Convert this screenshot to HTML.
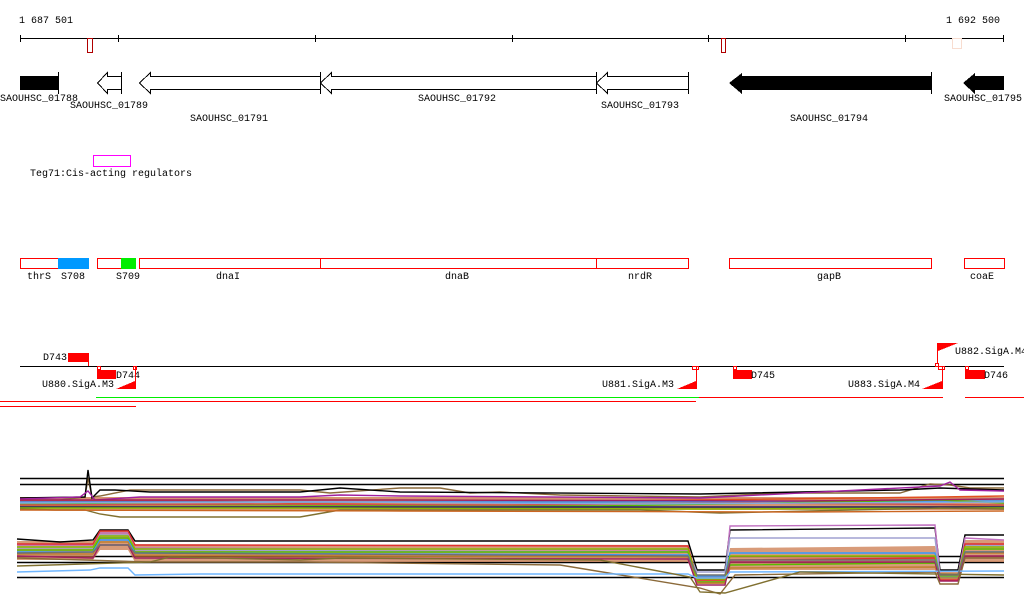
<!DOCTYPE html>
<html><head><meta charset="utf-8"><style>
html,body{margin:0;padding:0;background:#fff;width:1024px;height:611px;overflow:hidden}
svg text{font-family:"Liberation Mono","DejaVu Sans Mono",monospace;font-size:10px;fill:#000}
</style></head><body>
<svg width="1024" height="611" viewBox="0 0 1024 611" xmlns="http://www.w3.org/2000/svg" shape-rendering="crispEdges">
<text x="19" y="23">1 687 501</text>
<text x="946" y="23">1 692 500</text>
<g stroke="#000" stroke-width="1">
<line x1="20" y1="38.5" x2="1004" y2="38.5"/>
<line x1="20.5" y1="35" x2="20.5" y2="42"/><line x1="118.5" y1="35" x2="118.5" y2="42"/>
<line x1="315.5" y1="35" x2="315.5" y2="42"/><line x1="512.5" y1="35" x2="512.5" y2="42"/>
<line x1="708.5" y1="35" x2="708.5" y2="42"/><line x1="905.5" y1="35" x2="905.5" y2="42"/>
<line x1="1003.5" y1="35" x2="1003.5" y2="42"/>
</g>
<rect x="87.5" y="38.5" width="5" height="14" fill="none" stroke="#b00000"/>
<rect x="721.5" y="38.5" width="4" height="14" fill="none" stroke="#b00000"/>
<rect x="952.5" y="38.5" width="9" height="10" fill="none" stroke="#f8ddd0"/>
<rect x="20" y="76" width="38" height="14" fill="#000"/>
<line x1="58.5" y1="72" x2="58.5" y2="94" stroke="#000"/>
<g fill="#fff" stroke="#000" stroke-width="1">
<polygon points="97.5,83 107.5,72.5 107.5,76.5 121.5,76.5 121.5,89.5 107.5,89.5 107.5,93.5"/>
<polygon points="139.5,83 150.5,72.5 150.5,76.5 320.5,76.5 320.5,89.5 150.5,89.5 150.5,93.5"/>
<polygon points="320.5,83 331.5,72.5 331.5,76.5 596.5,76.5 596.5,89.5 331.5,89.5 331.5,93.5"/>
<polygon points="596.5,83 607.5,72.5 607.5,76.5 688.5,76.5 688.5,89.5 607.5,89.5 607.5,93.5"/>
<line x1="121.5" y1="72" x2="121.5" y2="94"/><line x1="320.5" y1="72" x2="320.5" y2="94"/>
<line x1="596.5" y1="72" x2="596.5" y2="94"/><line x1="688.5" y1="72" x2="688.5" y2="94"/>
</g>
<polygon points="729,83 742,73 742,76 931,76 931,90 742,90 742,94" fill="#000"/>
<line x1="931.5" y1="72" x2="931.5" y2="94" stroke="#000"/>
<polygon points="963,83 975,73 975,76 1004,76 1004,90 975,90 975,94" fill="#000"/>
<text x="0" y="101">SAOUHSC_01788</text>
<text x="70" y="108">SAOUHSC_01789</text>
<text x="190" y="121">SAOUHSC_01791</text>
<text x="418" y="101">SAOUHSC_01792</text>
<text x="601" y="108">SAOUHSC_01793</text>
<text x="790" y="121">SAOUHSC_01794</text>
<text x="944" y="101">SAOUHSC_01795</text>
<rect x="93.5" y="155.5" width="37" height="11" fill="none" stroke="#ff00ff"/>
<text x="30" y="176">Teg71:Cis-acting regulators</text>
<g fill="none" stroke="#ff0000">
<rect x="20.5" y="258.5" width="38" height="10"/>
<rect x="97.5" y="258.5" width="24" height="10"/>
<rect x="139.5" y="258.5" width="181" height="10"/>
<rect x="320.5" y="258.5" width="276" height="10"/>
<rect x="596.5" y="258.5" width="92" height="10"/>
<rect x="729.5" y="258.5" width="202" height="10"/>
<rect x="964.5" y="258.5" width="40" height="10"/>
</g>
<rect x="58" y="258" width="31" height="11" fill="#0099ff"/>
<rect x="121" y="258" width="15" height="11" fill="#00ee00"/>
<text x="27" y="279">thrS</text><text x="61" y="279">S708</text><text x="116" y="279">S709</text>
<text x="216" y="279">dnaI</text><text x="445" y="279">dnaB</text><text x="628" y="279">nrdR</text>
<text x="817" y="279">gapB</text><text x="970" y="279">coaE</text>
<line x1="20" y1="366.5" x2="1004" y2="366.5" stroke="#000"/>
<text x="43" y="360">D743</text>
<rect x="68" y="353" width="21" height="9" fill="#f00"/>
<line x1="88.5" y1="353" x2="88.5" y2="366" stroke="#f00"/>
<rect x="97" y="370" width="19" height="9" fill="#f00"/>
<rect x="97.5" y="366.5" width="3" height="3" fill="none" stroke="#f00"/>
<text x="116" y="378">D744</text>
<text x="42" y="387">U880.SigA.M3</text>
<polygon points="116,389 135,381 135,389" fill="#f00"/>
<line x1="135.5" y1="366" x2="135.5" y2="389" stroke="#f00"/>
<rect x="133.5" y="366.5" width="3" height="3" fill="none" stroke="#f00"/>
<text x="602" y="387">U881.SigA.M3</text>
<polygon points="677,389 696,381 696,389" fill="#f00"/>
<line x1="696.5" y1="366" x2="696.5" y2="389" stroke="#f00"/>
<rect x="692.5" y="366.5" width="6" height="3" fill="none" stroke="#f00"/>
<rect x="733" y="370" width="19" height="9" fill="#f00"/>
<rect x="733.5" y="366.5" width="3" height="3" fill="none" stroke="#f00"/>
<text x="751" y="378">D745</text>
<text x="848" y="387">U883.SigA.M4</text>
<polygon points="922,389 942,381 942,389" fill="#f00"/>
<line x1="942.5" y1="366" x2="942.5" y2="389" stroke="#f00"/>
<rect x="938.5" y="366.5" width="6" height="3" fill="none" stroke="#f00"/>
<polygon points="938,343 958,343 938,351" fill="#f00"/>
<line x1="937.5" y1="343" x2="937.5" y2="364" stroke="#f00"/>
<rect x="935.5" y="363.5" width="3" height="3" fill="none" stroke="#f00"/>
<text x="955" y="354">U882.SigA.M4</text>
<rect x="965" y="370" width="20" height="9" fill="#f00"/>
<rect x="965.5" y="366.5" width="3" height="3" fill="none" stroke="#f00"/>
<text x="984" y="378">D746</text>
<line x1="96" y1="397.5" x2="699" y2="397.5" stroke="#00ee00"/>
<line x1="699" y1="397.5" x2="943" y2="397.5" stroke="#f00"/>
<line x1="965" y1="397.5" x2="1024" y2="397.5" stroke="#f00"/>
<line x1="0" y1="401.5" x2="696" y2="401.5" stroke="#f00"/>
<line x1="0" y1="406.5" x2="136" y2="406.5" stroke="#f00"/>
<g fill="none" stroke-width="1.4" shape-rendering="auto">
<line x1="20" y1="478.5" x2="1004" y2="478.5" stroke="#000"/>
<line x1="20" y1="484.5" x2="1004" y2="484.5" stroke="#000"/>
<rect x="20" y="497" width="984" height="13" fill="#c87040" stroke="none" opacity="0.75"/>
<polyline stroke="#8b6a3a" points="20,500 60,500 85,497 88,478 92,497 100,496 130,490 300,490 330,493 400,488 440,488 470,493 500,492 560,495 700,497 780,493 900,493 930,484 950,485 970,488 1004,488"/>
<polyline stroke="#000" points="20,498 85,497 88,470 92,498 100,490 115,490 150,492 300,492 340,488 400,492 700,494 900,490 940,488 1004,490"/>
<polyline stroke="#a020a0" points="20,499 80,497 88,491 95,500 140,497 300,497 340,495 400,496 700,498 940,486 950,482 960,490 1004,491"/>
<polyline stroke="#e05020" points="20,501 200,501 300,503 500,502 700,500 940,497 1004,496"/>
<polyline stroke="#3399ff" points="20,502 300,502 600,502 1004,501"/>
<polyline stroke="#55bb00" points="20,504 300,505 600,506 940,500 1004,503"/>
<polyline stroke="#c08030" points="20,506 400,507 800,508 1004,506"/>
<polyline stroke="#d05050" points="20,505 250,504 500,505 750,503 1004,505"/>
<polyline stroke="#88aadd" points="20,503 330,502 640,504 1004,502"/>
<polyline stroke="#222266" points="20,507 500,507 1004,507"/>
<polyline stroke="#88bb00" points="20,508 300,508 700,509 1004,508"/>
<polyline stroke="#a02060" points="20,500 400,500 800,501 1004,499"/>
<polyline stroke="#807030" points="20,509 55,510 85,510 100,514 120,517 300,517 340,510 640,510 720,513 940,508 1004,509"/>
<polyline stroke="#cc6622" points="20,510 400,511 800,512 1004,511"/>
</g>
<g fill="none" stroke-width="1.4" shape-rendering="auto">
<line x1="17" y1="556.5" x2="1004" y2="556.5" stroke="#000"/>
<line x1="17" y1="562.5" x2="1004" y2="562.5" stroke="#000"/>
<line x1="17" y1="577.5" x2="1004" y2="577.5" stroke="#000"/>
<polygon points="17,541 93,541 100,530 128,530 135,544 688,545 697,575 725,575 730,548 935,546 940,572 958,572 965,540 1004,540 1004,562 965,562 958,580 940,580 935,570 730,570 725,584 697,584 688,562 135,562 128,550 100,550 93,560 17,560" fill="#c87040" stroke="none" opacity="0.7"/>
<polyline stroke="#000" points="17,539 60,542 93,540 100,530 128,530 135,541 688,541 697,570 725,570 730,530 935,528 940,570 958,570 965,535 1004,535"/>
<polyline stroke="#c070c0" points="17,545 93,545 100,533 128,533 135,548 688,550 697,578 725,578 730,526 935,525 940,575 958,575 965,538 1004,540"/>
<polyline stroke="#a0a0d0" points="17,548 93,548 100,535 128,535 135,550 688,552 697,572 725,572 730,538 935,538 940,578 958,578 965,545 1004,546"/>
<polyline stroke="#e03030" points="17,544 93,544 100,531 128,531 135,545 688,546 697,580 725,580 730,560 935,558 940,580 958,580 965,544 1004,544"/>
<polyline stroke="#55bb00" points="17,550 93,550 100,538 128,538 135,552 688,552 697,582 725,582 730,565 935,563 940,575 958,575 965,549 1004,549"/>
<polyline stroke="#3399ff" points="17,552 93,552 100,540 128,540 135,553 688,555 697,576 725,576 730,553 935,553 940,577 958,577 965,552 1004,552"/>
<polyline stroke="#c08030" points="17,554 93,554 100,542 128,542 135,555 688,557 697,583 725,583 730,568 935,567 940,578 958,578 965,553 1004,553"/>
<polyline stroke="#a02060" points="17,556 93,558 100,545 128,545 135,558 688,559 697,585 725,585 730,562 935,562 940,581 958,581 965,556 1004,556"/>
<polyline stroke="#88bb00" points="17,547 93,547 100,536 128,536 135,549 688,549 697,579 725,579 730,556 935,556 940,576 958,576 965,547 1004,547"/>
<polyline stroke="#8b6a3a" points="17,558 150,562 300,562 560,565 700,588 720,594 735,575 935,572 940,584 958,584 965,558 1004,558"/>
<polyline stroke="#6fb6ff" points="17,572 90,570 100,568 128,568 135,575 200,574 688,574 697,578 725,578 730,572 1004,571"/>
<polyline stroke="#807030" points="17,566 150,562 170,557 300,560 340,558 600,560 690,577 700,592 725,593 800,572 1004,575"/>
<polyline stroke="#707070" points="17,553 93,552 100,545 128,545 135,553 688,556 697,575 725,575 730,560 935,560 940,575 958,575 965,552 1004,552"/>
</g>
</svg>
</body></html>
